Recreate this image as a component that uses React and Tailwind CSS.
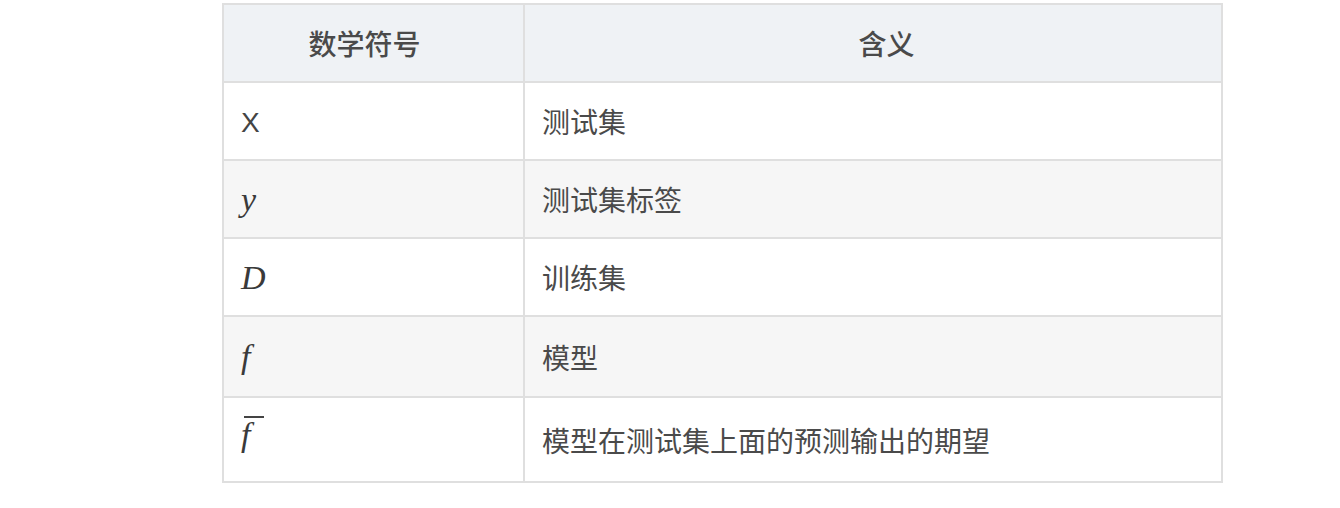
import React from 'react'

const mathCls = "font-['Liberation_Serif',serif] italic text-[34px] text-[#3a3a3a]"

const rows = [
    { sym: <span className="font-['Liberation_Sans','Noto_Sans',sans-serif] text-[28px] text-[#444]">X</span>, text: '测试集', h: 'h-[78px]' },
    { sym: <span className={mathCls}>y</span>, text: '测试集标签', h: 'h-[78px]' },
    { sym: <span className={mathCls}>D</span>, text: '训练集', h: 'h-[78px]' },
    { sym: <span className={mathCls}>f</span>, text: '模型', h: 'h-[81px]' },
    {
        sym: (
            <div className="flex flex-col items-start pb-[12px]">
                <span className="ml-[3px] w-[20px] h-[2px] bg-[#444]"></span>
                <span className={`${mathCls} leading-[34px]`}>f</span>
            </div>
        ),
        text: '模型在测试集上面的预测输出的期望',
        h: 'h-[85px]'
    },
]

export default function App(){
    return (
        <div className="w-[1340px] h-[508px] bg-white pt-[3px] pl-[222px] font-['Noto_Sans_CJK_SC','Noto_Sans',sans-serif]">
            <table className="w-[1001px] border-collapse text-[28px] text-[#4a4a4a]">
                <thead>
                    <tr className="h-[78px] bg-[#eff2f5]">
                        <th className="w-[301px] border-2 border-[#dfdfdf] pr-[18px] font-medium text-center">数学符号</th>
                        <th className="border-2 border-[#dfdfdf] pl-[27px] font-medium text-center">含义</th>
                    </tr>
                </thead>
                <tbody>
                    {rows.map((r, i) => (
                        <tr key={i} className={`${r.h} ${i % 2 === 1 ? 'bg-[#f6f6f6]' : 'bg-white'}`}>
                            <td className="border-2 border-[#dfdfdf] px-[17px] py-0">{r.sym}</td>
                            <td className="border-2 border-[#dfdfdf] px-[17px] py-0">{r.text}</td>
                        </tr>
                    ))}
                </tbody>
            </table>
        </div>
    )
}
